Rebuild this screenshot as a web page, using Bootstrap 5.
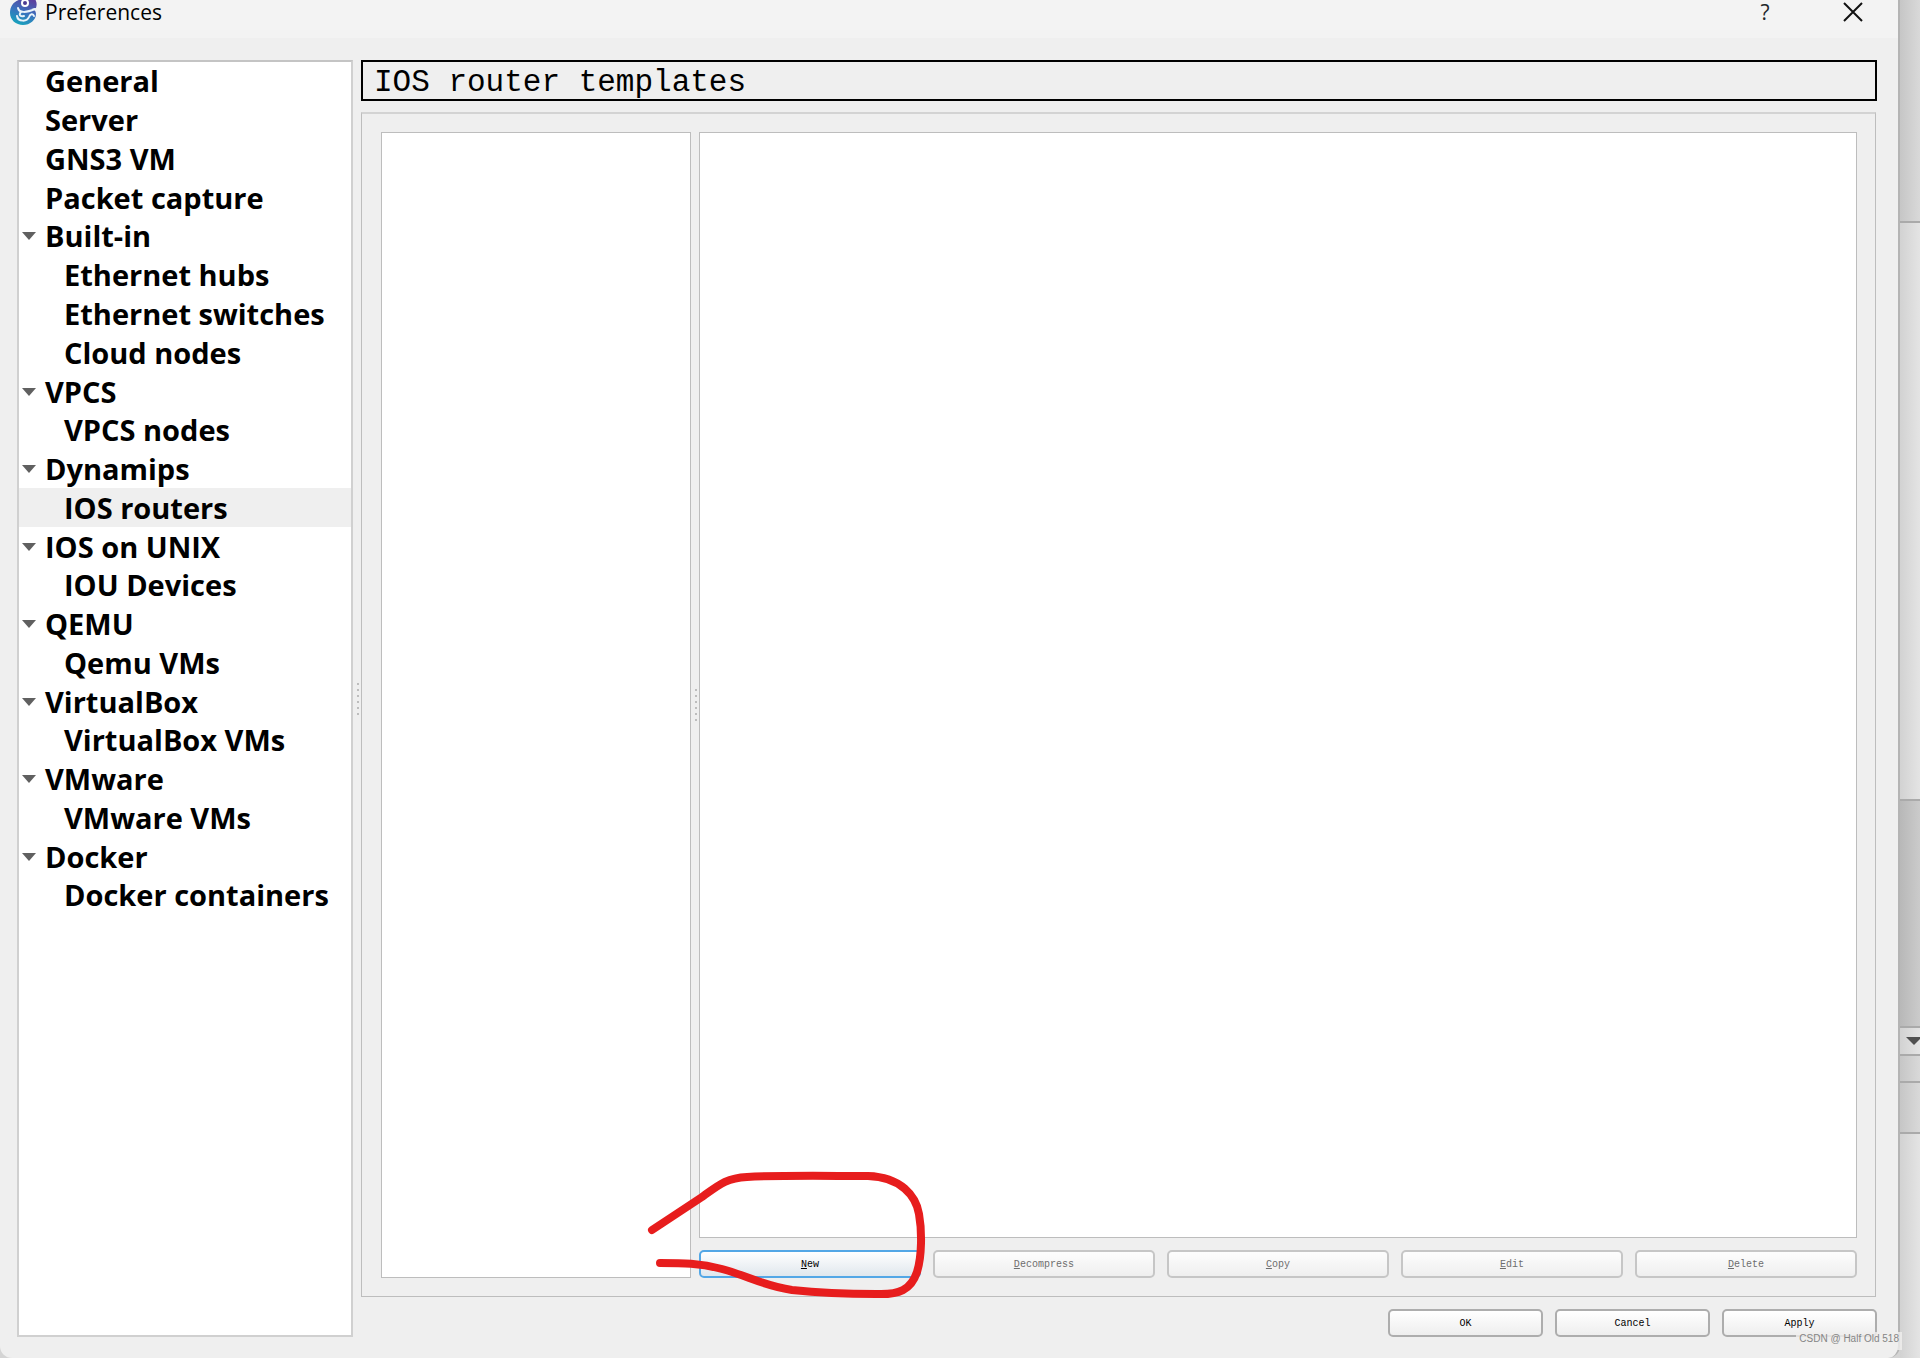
<!DOCTYPE html>
<html lang="en">
<head>
<meta charset="utf-8">
<meta name="viewport" content="width=device-width, initial-scale=1">
<title>Preferences</title>
<link href="https://cdn.jsdelivr.net/npm/bootstrap@5.3.0/dist/css/bootstrap.min.css" rel="stylesheet">
<style>
  body { background: #d4d4d4; color: #000; font-family: "Open Sans", "Noto Sans", sans-serif; }
  .dialog { background: #efefef; border-right: 2px solid #b4b4b4; border-radius: 0 0 12px 12px; min-width: 0; }
  .titlebar { background: #f3f3f3; height: 38px; padding: 0 33px 14px 9px; }
  .titlebar h1 { font-size: 21px; line-height: 24px; }
  .titlebar button { width: 24px; height: 24px; font-size: 21px; line-height: 24px; }
  .content-area { padding: 22px 21px 21px 17px; min-height: 0; }
  .tree { width: 336px; border: 2px solid #d0d0d0; border-top-color: #c4c4c4; }
  .tree-items { height: 853px; }
  .tree a { flex: 1 1 0; color: #000; font-weight: 700; font-size: 29px; line-height: 38px; padding-left: 26px; white-space: nowrap; text-decoration: none; }
  .tree a.child { padding-left: 45px; }
  .tree a.active { background: #efefef; }
  .tree a.parent { padding-left: 3px; }
  .tree a.parent::before { content: ""; border: 7px solid transparent; border-top: 8px solid #606060; border-bottom: 0; margin-right: 9px; }
  .grip { width: 8px; gap: 4px; padding-left: 4px; }
  .grip i { width: 2px; height: 2px; background: #bdbdbd; }
  .pane-title { height: 41px; border: 2px solid #000; padding: 3px 0 0 11px; font: 31px/36px "Liberation Mono", monospace; margin-bottom: 11px; }
  .frame { border: 1px solid #bdbdbd; border-top: 2px solid #d3d3d3; padding: 18px 18px 18px 19px; min-height: 0; margin-right: 1px; }
  .listbox { width: 310px; border: 1px solid #bdbdbd; }
  .view { border: 1px solid #bdbdbd; }
  .btn-row { gap: 12px; }
  .qt-btn { height: 28px; font: 10px/12px "Liberation Mono", monospace; color: #000; padding: 2px 0 0; border: 2px solid #adadad; border-radius: 5px; background: linear-gradient(#fff, #eee); }
  .qt-btn:disabled { color: #6e6e6e; border-color: #c6c6c6; opacity: 1; background: linear-gradient(#fdfdfd, #efefef); }
  .qt-btn.default { border-color: #53a7e6; background: linear-gradient(#fff, #e0e7ed); }
  .slot { flex: 1 1 20%; }
  .slot svg { left: -60px; top: -90px; pointer-events: none; z-index: 2; }
  .dialog-actions { padding-top: 12px; }
  .dialog-actions .qt-btn { width: 155px; }
  .behind { width: 20px; background: linear-gradient(90deg, #c6c6c6, #d9d9d9); }
  .behind div { border-bottom: 2px solid #aaa; }
  .behind .pale { background: linear-gradient(90deg, #d2d2d2, #e4e4e4); }
  .b1 { height: 223px; } .b2 { height: 578px; } .b3 { height: 227px; background: linear-gradient(90deg, #b8b8b8, #cbcbcb); }
  .b4 { height: 28px; padding: 9px 0 0 6px; } .b5 { height: 27px; } .b6 { height: 51px; }
  .b4 svg { display: block; }
  .stamp { right: 18px; bottom: 8px; height: 18px; padding: 0 3px; background: #f0efeecc; color: #858585; font: 10px/14px "Liberation Sans", sans-serif; z-index: 3; }
</style>
</head>
<body class="d-flex vh-100 overflow-hidden position-relative">
<main class="dialog flex-fill d-flex flex-column">
  <header class="titlebar d-flex align-items-center">
    <svg width="28" height="28" viewBox="0 0 28 28" aria-hidden="true">
      <defs><linearGradient id="skin" x1="0.7" y1="0" x2="0.3" y2="1"><stop offset="0" stop-color="#5b419f"/><stop offset=".5" stop-color="#3a72bd"/><stop offset="1" stop-color="#16a5bd"/></linearGradient></defs>
      <path d="M14 1C5 2 1 8 1 15c0 7 6 12 13 12 7 0 13-5 13-11 0-3-2-5-5-5l5-1c1-3 1-6-1-9z" fill="url(#skin)"/>
      <circle cx="16" cy="5" r="4" fill="#fff"/><circle cx="16" cy="5" r="2" fill="#4c3b92"/>
      <path d="M9 10c1 5 8 5 17 1M12 14c-3 3 0 5 3 4M8 18c1 6 10 6 12 1 1-3 4-4 5-1" fill="none" stroke="#e9f3fa" stroke-width="2" stroke-linecap="round"/>
    </svg>
    <h1 class="fw-normal mb-0 ms-2 me-auto">Preferences</h1>
    <button type="button" class="btn p-0 border-0 me-5" aria-label="Help">?</button>
    <button type="button" class="btn p-0 border-0 ms-3 d-flex justify-content-center align-items-center" aria-label="Close">
      <svg width="20" height="20" viewBox="0 0 20 20" stroke="#111" stroke-width="2"><path d="M1 1l18 18M19 1L1 19"/></svg>
    </button>
  </header>

  <div class="content-area d-flex flex-fill">
    <nav class="tree bg-white flex-shrink-0" aria-label="Preference pages">
      <div class="tree-items d-flex flex-column">
        <a href="#" class="d-flex align-items-center">General</a>
        <a href="#" class="d-flex align-items-center">Server</a>
        <a href="#" class="d-flex align-items-center">GNS3 VM</a>
        <a href="#" class="d-flex align-items-center">Packet capture</a>
        <a href="#" class="parent d-flex align-items-center">Built-in</a>
        <a href="#" class="child d-flex align-items-center">Ethernet hubs</a>
        <a href="#" class="child d-flex align-items-center">Ethernet switches</a>
        <a href="#" class="child d-flex align-items-center">Cloud nodes</a>
        <a href="#" class="parent d-flex align-items-center">VPCS</a>
        <a href="#" class="child d-flex align-items-center">VPCS nodes</a>
        <a href="#" class="parent d-flex align-items-center">Dynamips</a>
        <a href="#" class="child active d-flex align-items-center">IOS routers</a>
        <a href="#" class="parent d-flex align-items-center">IOS on UNIX</a>
        <a href="#" class="child d-flex align-items-center">IOU Devices</a>
        <a href="#" class="parent d-flex align-items-center">QEMU</a>
        <a href="#" class="child d-flex align-items-center">Qemu VMs</a>
        <a href="#" class="parent d-flex align-items-center">VirtualBox</a>
        <a href="#" class="child d-flex align-items-center">VirtualBox VMs</a>
        <a href="#" class="parent d-flex align-items-center">VMware</a>
        <a href="#" class="child d-flex align-items-center">VMware VMs</a>
        <a href="#" class="parent d-flex align-items-center">Docker</a>
        <a href="#" class="child d-flex align-items-center">Docker containers</a>
      </div>
    </nav>
    <div class="grip d-flex flex-column justify-content-center flex-shrink-0"><i></i><i></i><i></i><i></i><i></i><i></i></div>

    <section class="flex-fill d-flex flex-column">
      <h2 class="pane-title">IOS router templates</h2>
      <div class="frame d-flex flex-fill">
        <div class="listbox bg-white flex-shrink-0"></div>
        <div class="grip d-flex flex-column justify-content-center flex-shrink-0"><i></i><i></i><i></i><i></i><i></i><i></i></div>
        <div class="flex-fill d-flex flex-column">
          <div class="view bg-white flex-fill"></div>
          <div class="btn-row d-flex pt-2 mt-1">
            <div class="slot position-relative">
              <button type="button" class="btn qt-btn default w-100 d-block"><u>N</u>ew</button>
              <svg class="position-absolute" width="300" height="150" viewBox="639 1161 300 150" fill="none" stroke="#e71d1d" stroke-width="8" stroke-linecap="round" stroke-linejoin="round" aria-hidden="true">
                <path d="M652 1231L702 1198C720 1185 727 1179 747 1178C780 1176 830 1177 868 1177C901 1178 916 1197 919 1215C922 1232 922 1257 917 1273C911 1291 899 1296 876 1295C850 1295 820 1294 792 1291C764 1287 748 1277 722 1270C700 1264 682 1264 660 1264"/>
              </svg>
            </div>
            <button type="button" class="btn qt-btn slot" disabled><u>D</u>ecompress</button>
            <button type="button" class="btn qt-btn slot" disabled><u>C</u>opy</button>
            <button type="button" class="btn qt-btn slot" disabled><u>E</u>dit</button>
            <button type="button" class="btn qt-btn slot" disabled><u>D</u>elete</button>
          </div>
        </div>
      </div>
      <div class="dialog-actions btn-row d-flex justify-content-end">
        <button type="button" class="btn qt-btn">OK</button>
        <button type="button" class="btn qt-btn">Cancel</button>
        <button type="button" class="btn qt-btn">Apply</button>
      </div>
    </section>
  </div>
</main>

<aside class="behind d-flex flex-column flex-shrink-0" aria-hidden="true">
  <div class="b1"></div>
  <div class="b2 pale"></div>
  <div class="b3"></div>
  <div class="b4 pale"><svg width="14" height="9"><path d="M0 0h16L8 8z" fill="#505050"/></svg></div>
  <div class="b5"></div>
  <div class="b6"></div>
  <div class="pale flex-fill border-0"></div>
</aside>
<span class="stamp position-absolute">CSDN @ Half Old 518</span>
<script src="https://cdn.jsdelivr.net/npm/bootstrap@5.3.0/dist/js/bootstrap.bundle.min.js"></script>
</body>
</html>
